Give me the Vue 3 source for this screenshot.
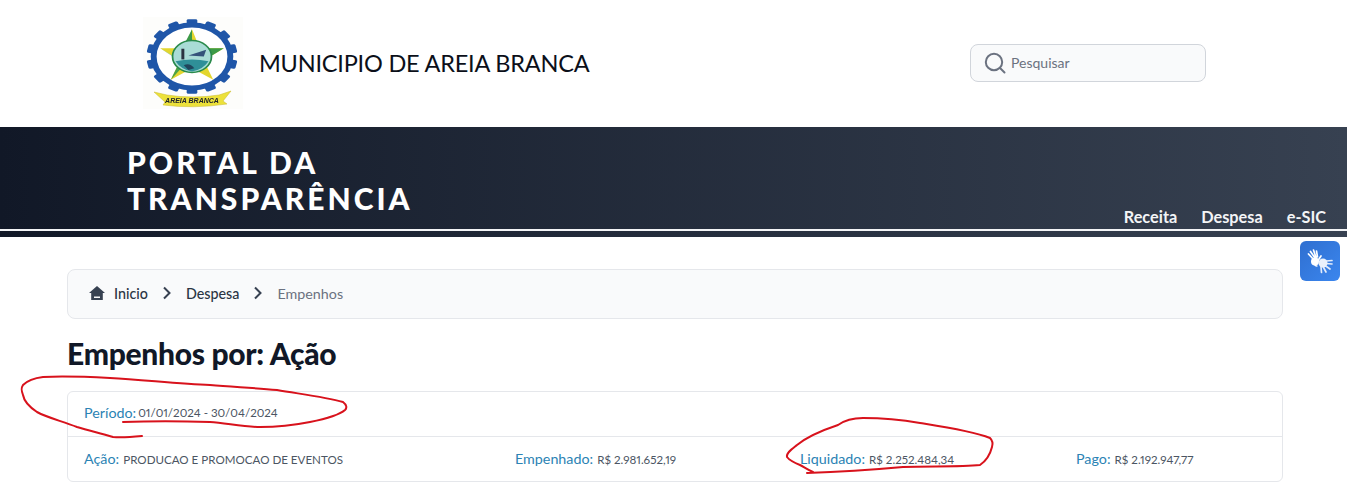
<script setup>
const crumbs = ['Despesa', 'Empenhos']
const totals = [
  { label: 'Ação:', value: 'PRODUCAO E PROMOCAO DE EVENTOS' },
  { label: 'Empenhado:', value: 'R$ 2.981.652,19' },
  { label: 'Liquidado:', value: 'R$ 2.252.484,34' },
  { label: 'Pago:', value: 'R$ 2.192.947,77' },
]
const teeth = Array.from({ length: 14 }, (_, i) => (360 / 14) * i)
</script>

<template>
  <div class="page">
    <header class="top">
      <svg class="logo" viewBox="0 0 100 92" aria-hidden="true">
        <rect width="100" height="92" fill="#fdfdfb" />
        <g transform="translate(49 39.500) scale(1.180 .970)">
          <rect v-for="a in teeth" :key="a" x="-4.500" y="-38.500" width="9" height="8" rx="1.500" fill="#1f56a8" :transform="`rotate(${a})`" />
          <circle r="32.500" fill="#fff" stroke="#1f56a8" stroke-width="5" />
          <polygon points="0,-28 6.500,-8.500 27,-8.500 10,4 18,24 0,12 -18,24 -10,4 -27,-8.500 -6.500,-8.500" fill="#e3d62e" />
          <polygon points="0,-28 0,-8 6.500,-8.500 27,-8.500 10,4 -6,-14" fill="#3c9a48" />
          <polygon points="-27,-8.500 -10,4 -18,24 -6,8" fill="#4ba24a" />
          <circle r="16.500" fill="#a9dcd6" stroke="#2a8a4c" stroke-width="1.500" />
          <path d="M-14 5 Q0 1 14 5 Q9 14 0 15.500 Q-9 14 -14 5Z" fill="#2f8f98" />
          <path d="M-3 -1 L12 -7 L10 0 Z" fill="#34527a" />
          <rect x="-9" y="-8" width="2.500" height="11" fill="#2a3340" />
          <path d="M-7 9q5-3 9 3l-5 2z" fill="#20455c" />
        </g>
        <path d="M11 75 L24 78 Q50 82 76 78 L88 74 L80 84 L84 87 Q50 92 20 88 L22 85 Z" fill="#ece13a" stroke="#c9b92a" stroke-width=".5" />
        <text x="49" y="85.500" text-anchor="middle" class="logo-text">AREIA BRANCA</text>
      </svg>
      <div class="city">MUNICIPIO DE AREIA BRANCA</div>
      <label class="search">
        <svg width="22" height="22" viewBox="0 0 22 22" fill="none" stroke="#6b7280" stroke-width="2" stroke-linecap="round">
          <circle cx="10" cy="10" r="8.200" />
          <path d="M16 16l4.500 4.500" />
        </svg>
        <span>Pesquisar</span>
      </label>
    </header>

    <section class="banner">
      <h2 class="portal">PORTAL DA<br />TRANSPARÊNCIA</h2>
      <nav class="nav">
        <a>Receita</a>
        <a>Despesa</a>
        <a>e-SIC</a>
      </nav>
    </section>

    <button class="vlibras" aria-label="Acessibilidade">
      <svg width="30" height="30" viewBox="0 0 30 30" fill="none" stroke="#fff" stroke-linecap="round" stroke-width="1.700">
        <path d="M9 14L3.500 8M10 12L5.500 5.500M11 11.500L8.500 4M12.500 11L11.500 5M13 14.500L16 10" />
        <circle cx="10" cy="15.500" r="4" fill="#fff" stroke="none" />
        <path d="M21 15L27 14.500M21 17.500L27 18M20 19.500L25 23M18 20.500L21 26M16 21L16.500 26.500" stroke="#e3ecfa" />
        <circle cx="18" cy="17" r="4.500" fill="#eaf1fb" stroke="none" />
        <path d="M12 20c-1.500 0-2.500-1-2.500-2.500" stroke-width="1.300" />
      </svg>
    </button>

    <main class="content">
      <div class="crumbs">
        <svg class="home" width="16" height="14" viewBox="0 0 16 14" fill="#374151">
          <path d="M8 0L0 7h2.200v7h11.600V7H16zM5 10.500h6V12H5z" fill-rule="evenodd" />
        </svg>
        <span class="crumb first">Inicio</span>
        <template v-for="(c, i) in crumbs" :key="c">
          <svg class="chev" width="10" height="14" viewBox="0 0 10 14" fill="none" stroke="#374151" stroke-width="2">
            <path d="M2 1.500L7.500 7 2 12.500" />
          </svg>
          <span class="crumb" :class="{ last: i === crumbs.length - 1 }">{{ c }}</span>
        </template>
      </div>

      <h1 class="title">Empenhos por: Ação</h1>

      <div class="card">
        <div class="row period">
          <span class="lbl">Período:</span> <span class="val">01/01/2024 - 30/04/2024</span>
        </div>
        <div class="row totals">
          <div v-for="t in totals" :key="t.label">
            <span class="lbl">{{ t.label }}</span> <span class="val">{{ t.value }}</span>
          </div>
        </div>
      </div>
    </main>

    <svg class="marks" width="1347" height="491" viewBox="0 0 1347 491" fill="none" stroke="#d8121c" stroke-width="2" stroke-linecap="round" stroke-linejoin="round" aria-hidden="true">
      <path d="M142 436C132 437 122 438 113 437C100 433 90 431 77 427C62 421 48 418 37 412C28 406 24 401 23 395C21 390 21 388 23 385C28 380 35 378 43 377C65 376 90 377 110 378C145 380 180 384 210 385C235 387 255 388 277 390C300 394 325 397 343 402C347 405 347 408 345 410C338 416 325 419 310 422C295 425 278 427 260 427C243 427 226 423 210 422C180 421 150 421 123 422" />
      <path d="M813 472C808 470 804 467 800 465C795 463 790 461 787 457C786 453 792 449 797 445C808 436 823 430 838 425C845 420 853 418 863 418C885 418 903 420 920 423C945 427 972 431 990 438C993 441 993 444 992 447C990 455 986 461 980 465C960 467 930 466 903 467C870 470 838 472 807 473" />
    </svg>
  </div>
</template>

<style>
html, body { margin: 0; background: #fff; overflow: hidden; }
</style>

<style scoped>
.page {
  position: relative;
  width: 1347px;
  height: 491px;
  overflow: hidden;
  font-family: Lato, "Noto Sans", sans-serif;
  color: #111827;
}
.top {
  height: 127px;
  display: flex;
  align-items: center;
  padding: 0 141px 0 143px;
  box-sizing: border-box;
}
.logo { width: 100px; height: 92px; flex: none; margin-top: -1px; filter: blur(.4px); }
.logo-text { font: italic 700 7px "Liberation Sans", sans-serif; fill: #20242c; }
.city {
  margin: -2px 0 0 16px;
  font-size: 23.500px;
  line-height: 32px;
  color: #0b0f19;
  letter-spacing: -0.2px;
  white-space: nowrap;
}
.search {
  margin: -2px 0 0 auto;
  width: 236px;
  height: 38px;
  box-sizing: border-box;
  display: flex;
  align-items: center;
  gap: 5px;
  padding-left: 13px;
  border: 1px solid #d1d5db;
  border-radius: 8px;
  background: #f9fafb;
  color: #6b7280;
  font-size: 14px;
}
.banner {
  position: relative;
  height: 110px;
  box-sizing: border-box;
  padding: 17px 0 0 127px;
  background: linear-gradient(90deg, #111827, #374151);
}
.banner::after {
  content: "";
  position: absolute;
  left: 0;
  right: 0;
  top: 102px;
  height: 2px;
  background: #f3f4f6;
}
.portal {
  margin: 0;
  color: #fff;
  font-size: 30px;
  line-height: 36px;
  font-weight: 900;
  letter-spacing: 3px;
}
.nav {
  position: absolute;
  right: 21px;
  top: 79px;
  display: flex;
  gap: 24px;
  color: #f3f4f6;
  font-size: 16.300px;
  line-height: 22px;
  font-weight: 700;
}
.vlibras {
  position: absolute;
  top: 241px;
  left: 1300px;
  width: 40px;
  height: 40px;
  padding: 5px;
  border: 0;
  border-radius: 6px;
  background: linear-gradient(135deg, #2f6fd0, #3b86ee);
}
.content { padding: 32px 64px 0 67px; }
.crumbs {
  height: 50px;
  box-sizing: border-box;
  display: flex;
  align-items: center;
  padding: 0 0 2px 21px;
  background: #f9fafb;
  border: 1px solid #e5e7eb;
  border-radius: 8px;
  font-size: 14.300px;
  color: #2b3544;
  font-weight: 500;
}
.home { margin-right: 9px; }
.chev { margin: 0 14px; }
.crumb.last { color: #6b7280; font-weight: 400; }
.title {
  margin: 18px 0 22px;
  height: 32px;
  font-size: 30px;
  line-height: 32px;
  font-weight: 900;
  letter-spacing: -0.3px;
  color: #111827;
}
.card {
  width: 1216px;
  box-sizing: border-box;
  border: 1px solid #e5e7eb;
  border-radius: 6px;
  color: #4b5563;
}
.row {
  height: 45px;
  box-sizing: border-box;
  padding: 0 16px;
  display: flex;
  align-items: center;
  gap: 2px;
}
.period { border-bottom: 1px solid #e5e7eb; padding-bottom: 3px; }
.totals {
  display: grid;
  gap: 0;
  height: 44px;
  padding-bottom: 3px;
  grid-template-columns: 431px 285px 276px 1fr;
}
.lbl { color: #2b83b4; font-size: 14.300px; }
.val { font-size: 11.600px; font-variant-numeric: proportional-nums; }
.marks { position: absolute; left: 0; top: 0; pointer-events: none; }
</style>
